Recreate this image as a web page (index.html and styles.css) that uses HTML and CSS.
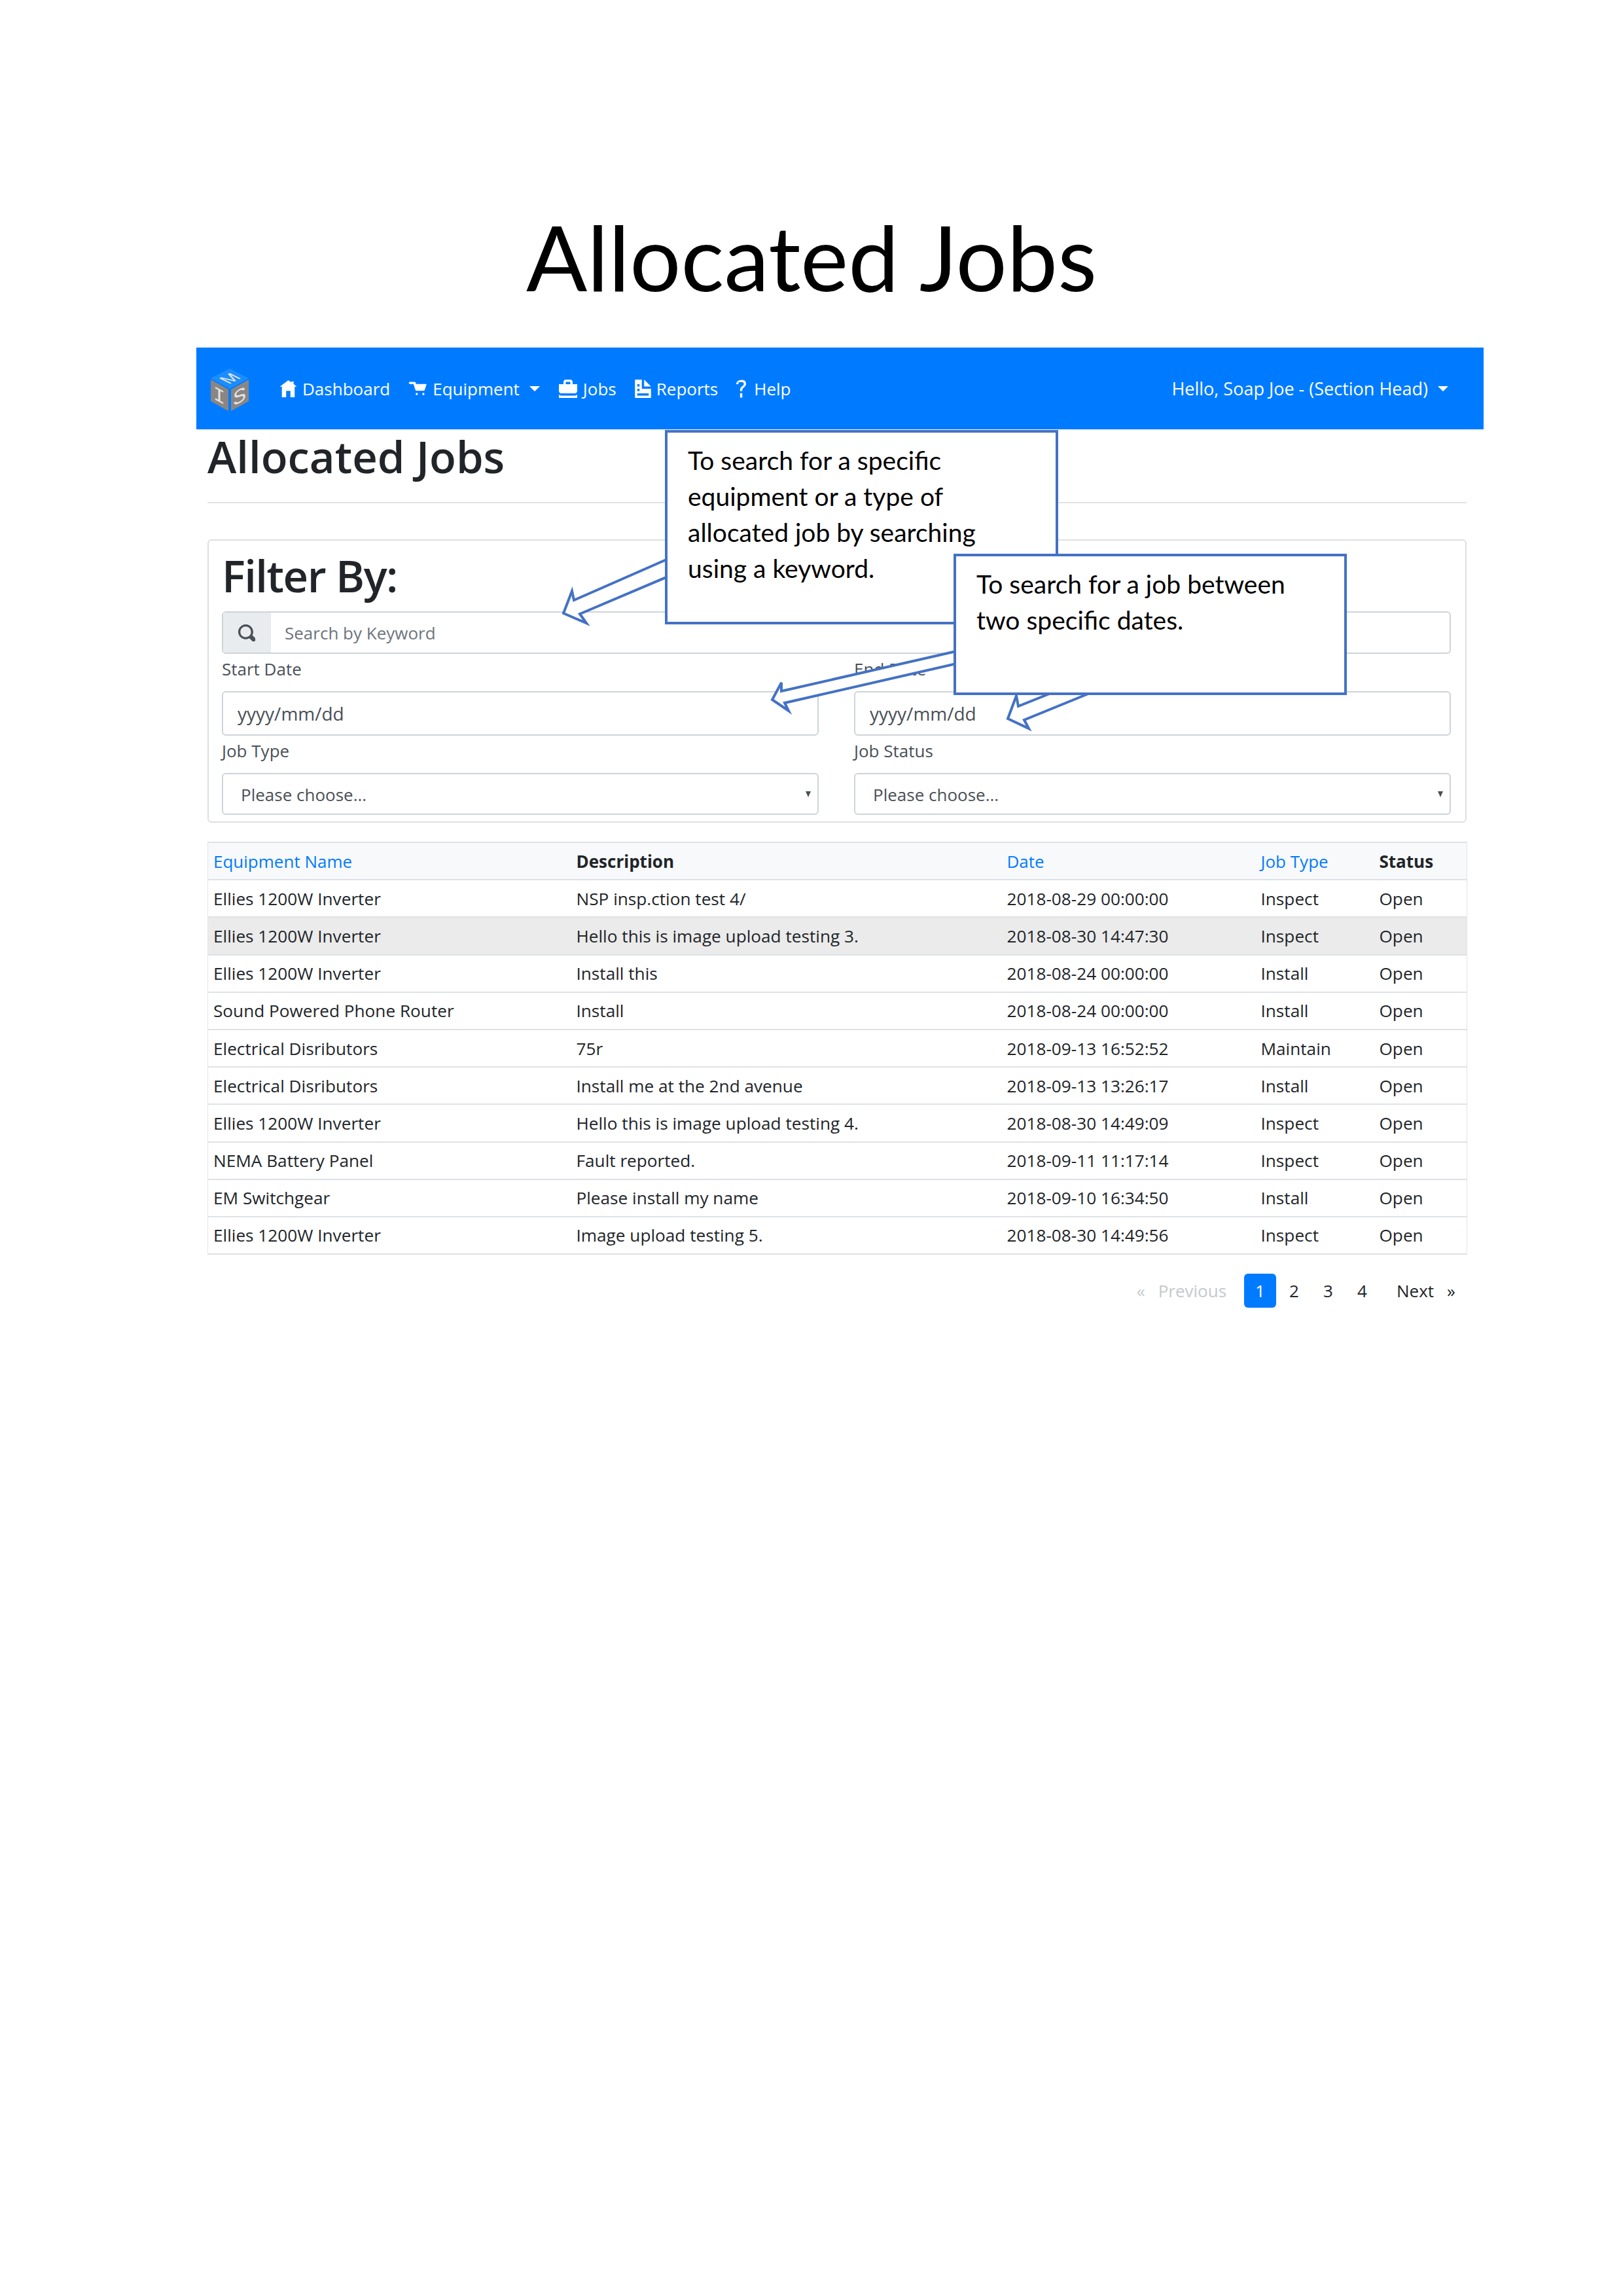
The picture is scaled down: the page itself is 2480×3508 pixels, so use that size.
FILE: index.html
```html
<!DOCTYPE html>
<html lang="en">
<head>
    <meta charset="UTF-8">
    <title>Allocated Jobs</title>
    <link rel="stylesheet" href="styles.css">
</head>
<body>
    <div class="page">
        <h1 class="doc-title">Allocated Jobs</h1>

        <div class="shot">
            <nav class="navbar">
                <svg class="logo" viewBox="0 0 60 66" width="60" height="66">
                    <polygon points="30,0 59,15 30,31 1,15" fill="#1c8dff"/>
                    <polygon points="1,17 28,32 28,65 1,50" fill="#8a8684"/>
                    <polygon points="32,32 59,17 59,50 32,65" fill="#8a8684"/>
                    <text class="logo-letter" transform="matrix(1 -.5 1 .5 28.500 24.250)">M</text>
                    <text class="logo-letter logo-letter-i" transform="matrix(1 .55 0 1 5 46)">I</text>
                    <text class="logo-letter logo-letter-s" transform="matrix(1 -.55 0 1 35 58)">S</text>
                </svg>
                <a class="nav-link">
                    <svg class="nav-icon" viewBox="0 0 8 8" width="27" height="26"><path d="M4 0 0 3h1v5h2V5h2v3h2V3.030L8 3 6.500 1.800V.5h-1v.5z"/></svg>
                    Dashboard
                </a>
                <a class="nav-link">
                    <svg class="nav-icon" viewBox="0 0 8 8" width="29" height="27"><path d="M.34 1a.5.5 0 0 0 .160 1h1.500l.090.250.410 1.250.410 1.250c.040.130.190.250.340.250h3.500c.140 0 .3-.12.340-.25l.810-2.500c.040-.13-.030-.25-.160-.25H3.250l-.280-.690C2.870 1.060 2.630 1 2.500 1h-2a.5.5 0 0 0-.060 0zM3.500 6a.5.5 0 1 0 0 1 .5.5 0 0 0 0-1zm3 0a.5.5 0 1 0 0 1 .5.5 0 0 0 0-1z"/></svg>
                    Equipment
                    <span class="caret"></span>
                </a>
                <a class="nav-link">
                    <svg class="nav-icon" viewBox="0 0 8 8" width="30" height="28"><path d="M3 0C2.450 0 2 .450 2 1v1H.030C.010 2 0 2.010 0 2.030V5c0 .550.450 1 1 1h6c.550 0 1-.450 1-1V2.030C8 2.010 7.990 2 7.970 2H6V1c0-.550-.450-1-1-1zm0 1h2v1H3zM0 6.500V8h8V6.500c-.3.300-.6.500-1 .500H1c-.400 0-.700-.200-1-.500z"/></svg>
                    Jobs
                </a>
                <a class="nav-link">
                    <svg class="nav-icon" viewBox="0 0 7 8" width="25" height="28"><path d="M0 0v8h7V4H3V0zm4 0v3h3zM1 2h1v1H1zm0 2h1v1H1zm0 2h5v1H1z"/></svg>
                    Reports
                </a>
                <a class="nav-link nav-link-tight">
                    <svg class="nav-icon" viewBox="0 0 5 8" width="17" height="28"><path d="M2.470 0C1.690 0 1.050.220.600.590.150.960 0 1.480 0 1.970h1c0-.240.040-.340.180-.450C.330 1.410.660 1.030 2.470 1c.340 0 .550.090.690.190.150.100.250.240.250.500 0 .500-.210.740-.630 1.090-.430.350-1.060.840-1.060 1.870V5h1v-.340c0-.620.350-.900.770-1.250.420-.350.900-.830.900-1.720 0-.550-.250-1.060-.660-1.350C3.330.040 2.910 0 2.470 0zM1.720 6v2h1V6z"/></svg>
                    Help
                </a>
                <a class="nav-link nav-user">
                    Hello, Soap Joe - (Section Head)
                    <span class="caret"></span>
                </a>
            </nav>

            <div class="content">
                <h2 class="page-heading">Allocated Jobs</h2>

                <form class="filter-card">
                    <h3 class="filter-title">Filter By:</h3>
                    <div class="search-group">
                        <span class="search-addon">
                            <svg viewBox="0 0 8 8" width="26" height="26"><path d="M3.500 0a3.500 3.500 0 1 0 1.710 6.550c.070.060.140.110.210.160l1 1a1.020 1.020 0 1 0 1.440-1.440l-1-1a1 1 0 0 0-.190-.160A3.500 3.500 0 0 0 3.500 0zm0 1a2.490 2.490 0 0 1 2.500 2.500c0 .690-.260 1.320-.720 1.780l-.030.030a1 1 0 0 0-.160.130 2.500 2.500 0 0 1-1.590.560A2.490 2.490 0 0 1 1 3.500 2.490 2.490 0 0 1 3.500 1z" fill="#495057"/></svg>
                        </span>
                        <input class="search-input" type="text" placeholder="Search by Keyword">
                    </div>
                    <div class="filter-grid">
                        <div class="field">
                            <label>Start Date</label>
                            <input class="date-input" type="text" placeholder="yyyy/mm/dd">
                        </div>
                        <div class="field">
                            <label>End Date</label>
                            <input class="date-input" type="text" placeholder="yyyy/mm/dd">
                        </div>
                        <div class="field">
                            <label>Job Type</label>
                            <div class="select-box"><select><option>Please choose...</option></select></div>
                        </div>
                        <div class="field">
                            <label>Job Status</label>
                            <div class="select-box"><select><option>Please choose...</option></select></div>
                        </div>
                    </div>
                </form>

                <table class="jobs-table">
                    <colgroup>
                        <col class="col-name"><col class="col-desc"><col class="col-date"><col class="col-type"><col class="col-status">
                    </colgroup>
                    <thead>
                        <tr>
                            <th class="sortable">Equipment Name</th>
                            <th>Description</th>
                            <th class="sortable">Date</th>
                            <th class="sortable">Job Type</th>
                            <th>Status</th>
                        </tr>
                    </thead>
                    <tbody>
                        <tr><td>Ellies 1200W Inverter</td><td>NSP insp.ction test 4/</td><td>2018-08-29 00:00:00</td><td>Inspect</td><td>Open</td></tr>
                        <tr class="row-hover"><td>Ellies 1200W Inverter</td><td>Hello this is image upload testing 3.</td><td>2018-08-30 14:47:30</td><td>Inspect</td><td>Open</td></tr>
                        <tr><td>Ellies 1200W Inverter</td><td>Install this</td><td>2018-08-24 00:00:00</td><td>Install</td><td>Open</td></tr>
                        <tr><td>Sound Powered Phone Router</td><td>Install</td><td>2018-08-24 00:00:00</td><td>Install</td><td>Open</td></tr>
                        <tr><td>Electrical Disributors</td><td>75r</td><td>2018-09-13 16:52:52</td><td>Maintain</td><td>Open</td></tr>
                        <tr><td>Electrical Disributors</td><td>Install me at the 2nd avenue</td><td>2018-09-13 13:26:17</td><td>Install</td><td>Open</td></tr>
                        <tr><td>Ellies 1200W Inverter</td><td>Hello this is image upload testing 4.</td><td>2018-08-30 14:49:09</td><td>Inspect</td><td>Open</td></tr>
                        <tr><td>NEMA Battery Panel</td><td>Fault reported.</td><td>2018-09-11 11:17:14</td><td>Inspect</td><td>Open</td></tr>
                        <tr><td>EM Switchgear</td><td>Please install my name</td><td>2018-09-10 16:34:50</td><td>Install</td><td>Open</td></tr>
                        <tr><td>Ellies 1200W Inverter</td><td>Image upload testing 5.</td><td>2018-08-30 14:49:56</td><td>Inspect</td><td>Open</td></tr>
                    </tbody>
                </table>

                <div class="pagination">
                    <span class="page-disabled page-arrow-prev">«</span>
                    <span class="page-disabled page-prev">Previous</span>
                    <span class="page-num page-active">1</span>
                    <span class="page-num">2</span>
                    <span class="page-num">3</span>
                    <span class="page-num">4</span>
                    <span class="page-next">Next</span>
                    <span class="page-arrow-next">»</span>
                </div>
            </div>
        </div>

        <!-- annotations drawn over the screenshot -->
        <svg class="arrows" viewBox="0 0 2480 3508" width="2480" height="3508">
            <polygon points="1025,852 877,917 874,903 861,937 896,952 886,938 1025,879"/>
        </svg>
        <div class="callout callout-keyword">To search for a specific equipment or a type of allocated job by searching using a keyword.</div>
        <svg class="arrows" viewBox="0 0 2480 3508" width="2480" height="3508">
            <polygon points="1470,993 1194,1056 1194,1043 1180,1069 1205,1086 1199,1074 1470,1012"/>
            <polygon points="1621,1053 1556,1079 1553,1063 1540,1098 1572,1113 1565,1100 1680,1053"/>
        </svg>
        <div class="callout callout-dates">To search for a job between two specific dates.</div>
    </div>
</body>
</html>
```

FILE: styles.css
```css
* {
    box-sizing: border-box;
}
body {
    margin: 0;
    background-color: #fff;
    color: #212529;
    font-family: "Open Sans", "Noto Sans", sans-serif;
    font-size: 26px;
}
.page {
    position: relative;
    width: 2480px;
    height: 3508px;
    overflow: hidden;
}
.doc-title {
    margin: 0;
    height: 531px;
    padding-top: 302px;
    font-family: Lato, "Liberation Sans", sans-serif;
    font-size: 138px;
    font-weight: 400;
    line-height: 180px;
    text-align: center;
    color: #000;
}
.shot {
    width: 1967px;
    margin-left: 300px;
}

/* navbar */
.navbar {
    display: flex;
    align-items: center;
    gap: 28px;
    height: 125px;
    padding: 0 54px 0 21px;
    background-color: #007bff;
    color: #fff;
}
.logo {
    margin-right: 18px;
    margin-top: 4px;
    flex: none;
    overflow: visible;
}
.logo-letter {
    font-family: "Liberation Sans", sans-serif;
    font-size: 24px;
    fill: #e6e6e6;
}
.logo-letter-i {
    font-family: "Liberation Mono", monospace;
    font-size: 30px;
}
.logo-letter-s {
    font-size: 30px;
}
.nav-link {
    display: flex;
    align-items: center;
    gap: 8px;
    white-space: nowrap;
}
.nav-link-tight {
    gap: 10px;
}
.nav-icon {
    fill: #fff;
    flex: none;
}
.caret {
    width: 0;
    height: 0;
    margin-left: 7px;
    border-top: 8px solid #fff;
    border-left: 8px solid transparent;
    border-right: 8px solid transparent;
}
.nav-user {
    margin-left: auto;
    font-size: 27px;
}

/* page content */
.content {
    padding: 0 26px 0 17px;
}
.page-heading {
    margin: 0;
    height: 113px;
    padding-top: 6px;
    border-bottom: 2px solid #e3e3e3;
    font-size: 67px;
    font-weight: 600;
    line-height: 71px;
}
.filter-card {
    height: 433px;
    margin-top: 55px;
    padding: 0 22px 0 20px;
    border: 2px solid #dcdfe3;
    border-radius: 6px;
}
.filter-title {
    margin: 0;
    height: 108px;
    padding-top: 18px;
    font-size: 67px;
    font-weight: 600;
    line-height: 71px;
    letter-spacing: -1.5px;
}
.search-group {
    display: flex;
    height: 65px;
    border: 2px solid #ced4da;
    border-radius: 6px;
}
.search-addon {
    display: flex;
    align-items: center;
    justify-content: center;
    width: 73px;
    border-right: 2px solid #e9ecef;
    background-color: #e9ecef;
}
.search-input,
.date-input,
select {
    font-family: inherit;
    font-size: 26px;
    color: #495057;
    background: transparent;
    border: none;
    outline: none;
}
.search-input {
    flex: 1;
    padding: 0 21px;
}
.search-input::placeholder {
    color: #6c757d;
    opacity: 1;
}
.filter-grid {
    display: grid;
    grid-template-columns: 912px 912px;
    column-gap: 54px;
}
.field {
    display: flex;
    flex-direction: column;
}
.field label {
    height: 57px;
    padding-top: 5px;
    line-height: 36px;
    color: #495057;
}
.date-input {
    height: 68px;
    padding: 0 22px;
    border: 2px solid #ced4da;
    border-radius: 6px;
    font-size: 28px;
}
.date-input::placeholder {
    color: #495057;
    opacity: 1;
}
.select-box {
    position: relative;
    height: 64px;
    border: 2px solid #ced4da;
    border-radius: 6px;
}
.select-box select {
    width: 100%;
    height: 100%;
    padding: 2px 27px 0;
    appearance: none;
}
.select-box::after {
    content: "";
    position: absolute;
    top: 26px;
    right: 10px;
    border-top: 9px solid #495057;
    border-left: 4px solid transparent;
    border-right: 4px solid transparent;
}

/* table */
.jobs-table {
    width: 1924px;
    margin-top: 29px;
    border-collapse: collapse;
    table-layout: fixed;
    border-left: 1px solid #e3e5e9;
    border-right: 1px solid #e3e5e9;
}
.col-name { width: 553px; }
.col-desc { width: 658px; }
.col-date { width: 388px; }
.col-type { width: 181px; }
.col-status { width: 144px; }
.jobs-table th,
.jobs-table td {
    height: 57.2px;
    padding: 0 10px;
    border-top: 2px solid #dee2e6;
    border-bottom: 2px solid #dee2e6;
    text-align: left;
    white-space: nowrap;
    line-height: 36px;
}
.jobs-table td {
    font-size: 26.200px;
}
.jobs-table th:first-child,
.jobs-table td:first-child {
    padding-left: 8px;
}
.jobs-table th {
    background-color: #f8f9fa;
    font-weight: 700;
}
.jobs-table th.sortable {
    color: #007bff;
    font-weight: 400;
}
.row-hover td {
    background-color: #ebebeb;
}

/* pagination */
.pagination {
    display: flex;
    align-items: center;
    justify-content: flex-end;
    height: 52px;
    margin-top: 29px;
    padding-right: 17px;
    line-height: 52px;
}
.page-disabled {
    color: #c4c9ce;
}
.page-prev {
    margin-left: 20px;
    margin-right: 27px;
}
.page-num {
    width: 49px;
    margin-right: 3px;
    text-align: center;
    border-radius: 6px;
}
.page-active {
    background-color: #007bff;
    color: #fff;
}
.page-next {
    margin-left: 25px;
}
.page-arrow-next {
    margin-left: 20px;
}

/* annotations */
.arrows {
    position: absolute;
    top: 0;
    left: 0;
    pointer-events: none;
}
.arrows polygon {
    fill: #fff;
    stroke: #4472c4;
    stroke-width: 4;
}
.callout {
    position: absolute;
    padding: 15px 31px;
    border: 4px solid #4472c4;
    background-color: #fff;
    font-family: Lato, "Liberation Sans", sans-serif;
    font-size: 39px;
    line-height: 55px;
    color: #000;
}
.callout-keyword {
    top: 657px;
    left: 1016px;
    width: 601px;
    height: 297px;
}
.callout-dates {
    top: 846px;
    left: 1457px;
    width: 601px;
    height: 216px;
}
```
